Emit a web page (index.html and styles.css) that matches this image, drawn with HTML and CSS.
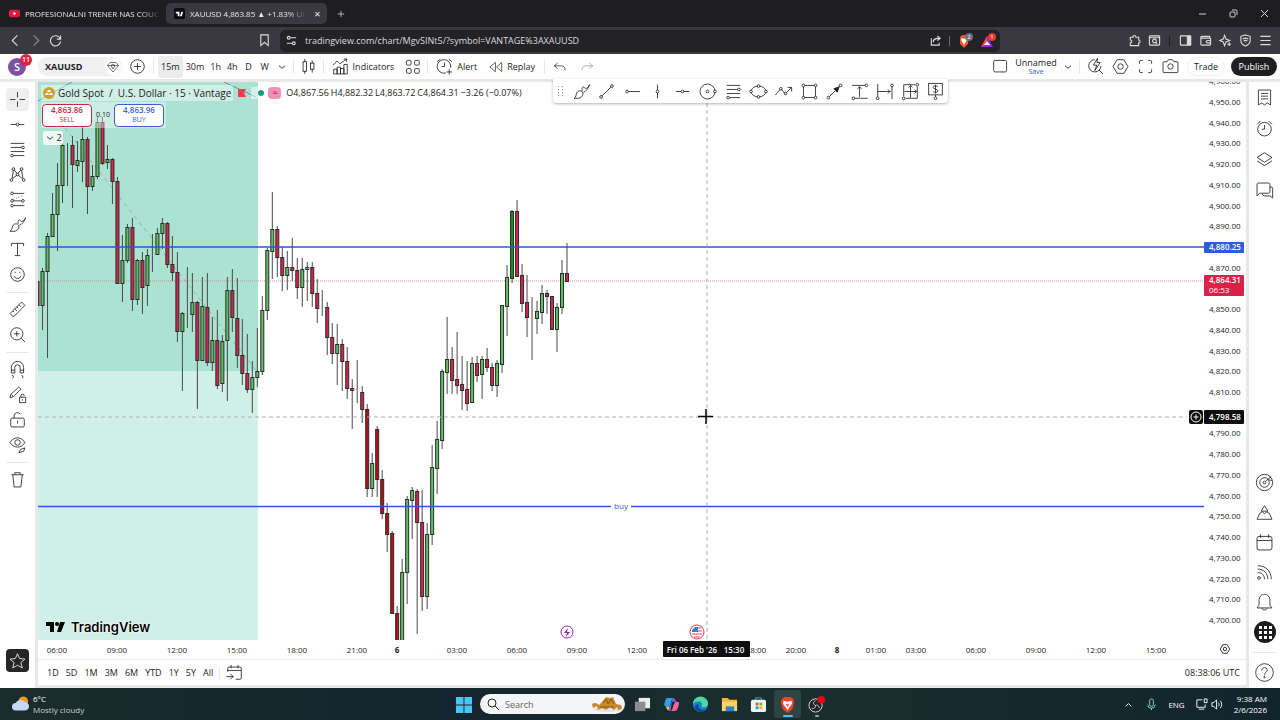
FILE: index.html
```html
<!DOCTYPE html>
<html lang="en">
<head>
    <meta charset="utf-8">
    <title>XAUUSD 4,863.85 ▲ +1.83% Unnamed</title>
    <link rel="stylesheet" href="styles.css">
</head>
<body>
    <!-- icon sprite -->
    <svg class="sprite" aria-hidden="true">
        <symbol id="i-cross" viewBox="0 0 28 28"><path d="M14 3v8M14 17v8M3 14h8M17 14h8"/></symbol>
        <symbol id="i-hmid" viewBox="0 0 28 28"><path d="M4 14h8M16 14h8"/><circle cx="14" cy="14" r="2"/></symbol>
        <symbol id="i-hray" viewBox="0 0 28 28"><path d="M8 14h17"/><circle cx="6" cy="14" r="2"/></symbol>
        <symbol id="i-vline" viewBox="0 0 28 28"><path d="M14 4v8M14 16v8"/><circle cx="14" cy="14" r="2"/></symbol>
        <symbol id="i-trend" viewBox="0 0 28 28"><path d="M7.500 20.500L20.500 7.500"/><circle cx="6" cy="22" r="2"/><circle cx="22" cy="6" r="2"/></symbol>
        <symbol id="i-fib" viewBox="0 0 28 28"><path d="M4 5h20M4 11h16M4 17h20M8 23h16"/><circle cx="22" cy="11" r="2"/><circle cx="6" cy="23" r="2"/></symbol>
        <symbol id="i-pattern" viewBox="0 0 28 28"><path d="M6 20L8 8M9 7l4 5M15 12l4-5M20 8l2 12M7 20l6-5M15 15l6 5"/><circle cx="5" cy="22" r="2"/><circle cx="8" cy="6" r="2"/><circle cx="14" cy="14" r="2"/><circle cx="20" cy="6" r="2"/><circle cx="23" cy="22" r="2"/></symbol>
        <symbol id="i-position" viewBox="0 0 28 28"><path d="M8 5h16M8 16h12M8 23h16"/><path d="M8 14l14-6" stroke-dasharray="1 3"/><circle cx="6" cy="5" r="2"/><circle cx="6" cy="16" r="2"/><circle cx="22" cy="16" r="2"/><circle cx="6" cy="23" r="2"/></symbol>
        <symbol id="i-brush" viewBox="0 0 28 28"><path d="M3 24c3-2 3-5 4-8 2-4 8-4 9 0s-3 8-7 8zM15 13c-1-4 1-7 3-5 2 3 5 1 8-4M17 15c4-1 7-6 9-11"/></symbol>
        <symbol id="i-text" viewBox="0 0 28 28"><path d="M5 9V5h18v4M14 5v18M10 23h8"/></symbol>
        <symbol id="i-smile" viewBox="0 0 28 28"><circle cx="14" cy="14" r="10"/><path d="M9 16c1 5 9 5 10 0M10.500 10v2M17.500 10v2"/></symbol>
        <symbol id="i-ruler" viewBox="0 0 28 28"><path d="M3 20L20 3l5 5L8 25zM7 16l2 2M10 13l3 3M13 10l2 2M16 7l3 3"/></symbol>
        <symbol id="i-zoom" viewBox="0 0 28 28"><circle cx="13" cy="13" r="9"/><path d="M19.500 19.500L25 25M13 9v8M9 13h8"/></symbol>
        <symbol id="i-magnet" viewBox="0 0 28 28"><path d="M5 19v-8a9 9 0 0118 0v8h-5v-8a4 4 0 00-8 0v8zM5 15h5M18 15h5M6 22l2 2-1 3M20 22l2 2-1 3"/></symbol>
        <symbol id="i-pencillock" viewBox="0 0 28 28"><path d="M3 19l1-5L16 3l3 3L8 17zM5 14l3 3M17 18h9v8h-9zM19 18v-2a2.500 2.500 0 015 0M21.500 21v2"/></symbol>
        <symbol id="i-lock" viewBox="0 0 28 28"><rect x="4" y="12" width="20" height="13" rx="2"/><path d="M9 12V8a5 5 0 019-2M14 16v4"/></symbol>
        <symbol id="i-eye" viewBox="0 0 28 28"><path d="M3 11c5-9 17-9 22 0-5 9-17 9-22 0zM16 26l3-5 6-2-2 5z"/><circle cx="14" cy="11" r="4"/></symbol>
        <symbol id="i-trash" viewBox="0 0 28 28"><path d="M5 7h18M10 7V4h8v3M7 7l2 18h10l2-18"/></symbol>
        <symbol id="i-star" viewBox="0 0 28 28"><path d="M14 4l3 7 8 1-6 5 2 8-7-4-7 4 2-8-6-5 8-1z"/></symbol>
        <symbol id="i-circle" viewBox="0 0 28 28"><circle cx="14" cy="14" r="11"/><circle cx="14" cy="14" r="2"/><circle class="dot-w" cx="25" cy="14" r="2"/></symbol>
        <symbol id="i-ellipse" viewBox="0 0 28 28"><ellipse cx="14" cy="14" rx="11" ry="8"/><circle class="dot-w" cx="3" cy="14" r="2"/><circle class="dot-w" cx="25" cy="14" r="2"/><circle class="dot-w" cx="14" cy="6" r="2"/><circle class="dot-w" cx="14" cy="22" r="2"/></symbol>
        <symbol id="i-path" viewBox="0 0 28 28"><path d="M2 19l7-8M11 11l5 6M18 16l8-8M20 8h6v6"/><circle cx="10" cy="10" r="2"/><circle cx="17" cy="17" r="2"/></symbol>
        <symbol id="i-rect" viewBox="0 0 28 28"><rect x="5" y="5" width="18" height="18"/><circle class="dot-w" cx="5" cy="5" r="2"/><circle class="dot-w" cx="23" cy="5" r="2"/><circle class="dot-w" cx="5" cy="23" r="2"/><circle class="dot-w" cx="23" cy="23" r="2"/></symbol>
        <symbol id="i-arrow" viewBox="0 0 28 28"><path d="M6 22L22 6"/><path class="solid" d="M13 10l8-3-3 8z"/><circle class="dot-w" cx="5" cy="23" r="2"/><circle class="dot-w" cx="23" cy="5" r="2"/></symbol>
        <symbol id="i-prange" viewBox="0 0 28 28"><path d="M3 5h19M7 24h19M14 7v15M11 10l3-3 3 3"/><circle cx="24" cy="5" r="2"/><circle cx="5" cy="24" r="2"/></symbol>
        <symbol id="i-drange" viewBox="0 0 28 28"><path d="M4 3v19M25 7v18M4 14h19M19 11l3 3-3 3"/><circle cx="4" cy="24" r="2"/><circle cx="25" cy="5" r="2"/></symbol>
        <symbol id="i-dprange" viewBox="0 0 28 28"><path d="M4 21V4h17M7 24h17V7M14 5v18M5 14h18M11 8l3-3 3 3M20 11l3 3-3 3"/><circle cx="24" cy="4" r="2"/><circle cx="4" cy="24" r="2"/></symbol>
        <symbol id="i-dollar" viewBox="0 0 28 28"><rect x="4" y="2" width="20" height="17"/><path d="M17.500 7c-1-2-7-2-7 1s7 2 7 5-6 3-7 1M14 4v13M14 19v3"/><circle cx="14" cy="24" r="2"/></symbol>
        <symbol id="i-plusc" viewBox="0 0 28 28"><circle cx="14" cy="14" r="10"/><path d="M14 9v10M9 14h10"/></symbol>
        <symbol id="i-gem" viewBox="0 0 28 28"><path d="M8 5h12l5 6-11 13L3 11zM3 11l11 0h11M10 11l4 7 4-7-4-3z"/></symbol>
        <symbol id="i-candles" viewBox="0 0 28 28"><rect x="6" y="7" width="5" height="14"/><path d="M8.500 3v4M8.500 21v4M19.500 5v4M19.500 18v5"/><rect x="17" y="9" width="5" height="9"/></symbol>
        <symbol id="i-indic" viewBox="0 0 28 28"><path d="M3 12l6-6 4 4 10-7M19 3h4v4M4 25v-7h5v7zM9 25V15h5v10M14 25v-8h5v8M19 25V11h5v14H9"/></symbol>
        <symbol id="i-grid4" viewBox="0 0 28 28"><rect x="5" y="5" width="7" height="7" rx="2"/><rect x="17" y="5" width="7" height="7" rx="2"/><rect x="5" y="17" width="7" height="7" rx="2"/><rect x="17" y="17" width="7" height="7" rx="2"/></symbol>
        <symbol id="i-alert" viewBox="0 0 28 28"><path d="M16 23.500A10 10 0 1123 16M14 8v6h-4M3 7l5-4M20 3l5 4M21 18v8M17 22h8"/></symbol>
        <symbol id="i-replay" viewBox="0 0 28 28"><path d="M13 6v16L3 14zM24 6v16l-9-8z"/></symbol>
        <symbol id="i-undo" viewBox="0 0 28 28"><path d="M10 7l-6 5 6 5M4 12h12c5 0 7 3 7 8"/></symbol>
        <symbol id="i-redo" viewBox="0 0 28 28"><path d="M18 7l6 5-6 5M24 12H12c-5 0-7 3-7 8"/></symbol>
        <symbol id="i-box" viewBox="0 0 28 28"><rect x="4" y="5" width="19" height="17" rx="2"/></symbol>
        <symbol id="i-chev" viewBox="0 0 28 28"><path d="M7 11l7 6 7-6"/></symbol>
        <symbol id="i-qsearch" viewBox="0 0 28 28"><path d="M13 4a9 9 0 109 9M19 19l6 6M17 2l-6 10h5l-3 8 8-12h-5z"/></symbol>
        <symbol id="i-hex" viewBox="0 0 28 28"><path d="M9 4h10l6 10-6 10H9L3 14z"/><circle cx="14" cy="14" r="4"/></symbol>
        <symbol id="i-full" viewBox="0 0 28 28"><path d="M5 10V7a2 2 0 012-2h3M18 5h3a2 2 0 012 2v3M23 18v3a2 2 0 01-2 2h-3M10 23H7a2 2 0 01-2-2v-3"/></symbol>
        <symbol id="i-camera" viewBox="0 0 28 28"><path d="M4 7h5l2-3h6l2 3h5a1 1 0 011 1v14a1 1 0 01-1 1H4a1 1 0 01-1-1V8a1 1 0 011-1z"/><circle cx="14" cy="14" r="4"/></symbol>
        <symbol id="i-list" viewBox="0 0 28 28"><path d="M5 3h18v22l-5-3-4 3-4-3-5 3zM9 8h10M9 12h10M9 16h10"/></symbol>
        <symbol id="i-clock" viewBox="0 0 28 28"><circle cx="14" cy="15" r="10"/><path d="M14 9v6h-4M3 8l5-5M20 3l5 5"/></symbol>
        <symbol id="i-layers" viewBox="0 0 28 28"><path d="M14 4l11 7-11 7L3 11zM3 16l11 7 11-7"/></symbol>
        <symbol id="i-chat" viewBox="0 0 28 28"><path d="M5 3h15a2 2 0 012 2v11a2 2 0 01-2 2H7l-4 4V5a2 2 0 012-2zM22 9h2a2 2 0 012 2v14l-4-3h-8a3 3 0 01-3-3"/></symbol>
        <symbol id="i-target" viewBox="0 0 28 28"><circle cx="14" cy="14" r="12"/><circle cx="14" cy="14" r="7"/><circle cx="14" cy="14" r="2"/><path d="M16 12l8-7M20 10l5 1"/></symbol>
        <symbol id="i-ideas" viewBox="0 0 28 28"><path d="M9 12l5-8 5 8zM7 15L3 24h22l-4-9M7 15l4-2 3 3 3-3 4 2"/></symbol>
        <symbol id="i-cal" viewBox="0 0 28 28"><rect x="3" y="5" width="22" height="20" rx="3"/><path d="M3 11h22M8 2v5M20 2v5"/></symbol>
        <symbol id="i-feed" viewBox="0 0 28 28"><circle cx="6" cy="22" r="2"/><path d="M4 14c6 0 10 4 10 10M4 9c9 0 15 6 15 15M4 4c12 0 20 8 20 20"/></symbol>
        <symbol id="i-bell" viewBox="0 0 28 28"><path d="M14 2c-5 0-8 4-8 9v7l-3 4h22l-3-4v-7c0-5-3-9-8-9zM10 22c1 4 7 4 8 0"/></symbol>
        <symbol id="i-help" viewBox="0 0 28 28"><circle cx="14" cy="14" r="13"/><path d="M10 11c0-6 9-5 8 0-1 3-4 3-4 7"/><circle cx="14" cy="21" r="1"/></symbol>
        <symbol id="i-goto" viewBox="0 0 28 28"><path d="M4 13V8a2 2 0 012-2h16a2 2 0 012 2v14a2 2 0 01-2 2h-6M4 11h20M9 3v5M19 3v5M2 20h10M8 16l4 4-4 4"/></symbol>
        <symbol id="i-back" viewBox="0 0 28 28"><path d="M18 3L7 14l11 11"/></symbol>
        <symbol id="i-fwd" viewBox="0 0 28 28"><path d="M10 3l11 11-11 11"/></symbol>
        <symbol id="i-reload" viewBox="0 0 28 28"><path d="M24 10A11 11 0 1025 16M25 3v8h-8"/></symbol>
        <symbol id="i-mark" viewBox="0 0 28 28"><path d="M6 2h16v23l-8-7-8 7z"/></symbol>
        <symbol id="i-site" viewBox="0 0 28 28"><path d="M12 8h12M4 20h11"/><circle cx="8" cy="8" r="3"/><circle cx="19" cy="20" r="3"/></symbol>
        <symbol id="i-share" viewBox="0 0 28 28"><path d="M5 9v15h17v-5M9 18c0-7 4-9 14-9M18 4l6 5-6 5"/></symbol>
        <symbol id="i-puzzle" viewBox="0 0 28 28"><path d="M5 7h6c-1-5 6-5 6 0h6v6c4 0 4 6 0 6v6H5v-6c4 0 4-6 0-6z"/></symbol>
        <symbol id="i-tabfind" viewBox="0 0 28 28"><rect x="3" y="4" width="22" height="20" rx="2"/><path d="M3 8h22M16 18l4 3"/><circle cx="14" cy="15" r="4"/></symbol>
        <symbol id="i-side" viewBox="0 0 28 28"><rect x="3" y="4" width="22" height="20" rx="1"/><path class="solid" d="M18 5h7v18h-7z"/></symbol>
        <symbol id="i-wallet" viewBox="0 0 28 28"><path d="M23 9V5H6a2 2 0 000 4h17a2 2 0 012 2v11a2 2 0 01-2 2H6a2 2 0 01-2-2V7M25 14h-7a2 2 0 000 5h7"/></symbol>
        <symbol id="i-spark" viewBox="0 0 28 28"><path d="M12 3l3 8 8 3-8 3-3 8-3-8-7-3 7-3zM22 18v8M18 22h8"/></symbol>
        <symbol id="i-shield" viewBox="0 0 28 28"><path d="M14 2l10 3v9c0 6-5 10-10 12C9 24 4 20 4 14V5zM8 11c4-3 8-3 12 0M10 15c3-2 5-2 8 0M14 18v1"/></symbol>
        <symbol id="i-menu" viewBox="0 0 28 28"><path d="M3 5h22M3 14h22M3 23h22"/></symbol>
    </svg>

    <div class="tabs">
        <div class="tab">
            <svg class="fav" viewBox="0 0 12 12"><rect y="2" width="12" height="8" rx="2" fill="#e5173b"/><path d="M5 4l3 2-3 2z" fill="#fff"/></svg>
            <span class="tab-name">PROFESIONALNI TRENER NAS COUC</span>
        </div>
        <div class="tab tab-active">
            <svg class="fav" viewBox="0 0 12 12"><rect width="12" height="12" rx="2" fill="#0c0c10"/><path d="M2 4h4v5H4V6H2zM8 4h2L8.500 9h-2z" fill="#fff"/></svg>
            <span class="tab-name">XAUUSD 4,863.85 ▲ +1.83% Un</span>
            <button class="tab-close" aria-label="Close tab">✕</button>
        </div>
        <button class="tab-new" aria-label="New tab"><svg viewBox="0 0 10 10"><path d="M5 1v8M1 5h8"/></svg></button>
        <div class="win">
            <button aria-label="Minimize"><svg viewBox="0 0 10 10"><path d="M1 5h7"/></svg></button>
            <button aria-label="Restore"><svg viewBox="0 0 10 10"><rect x="1" y="3" width="5" height="5" rx="1"/><path d="M3 1h4a1 1 0 011 1v4"/></svg></button>
            <button aria-label="Close"><svg viewBox="0 0 10 10"><path d="M1 1l7 7M8 1L1 8"/></svg></button>
        </div>
    </div>

    <div class="navbar">
        <div class="nav-left">
            <button aria-label="Back"><svg class="icon"><use href="#i-back"/></svg></button>
            <button class="dim" aria-label="Forward"><svg class="icon"><use href="#i-fwd"/></svg></button>
            <button aria-label="Reload"><svg class="icon"><use href="#i-reload"/></svg></button>
        </div>
        <button class="bookmark" aria-label="Bookmark"><svg class="icon"><use href="#i-mark"/></svg></button>
        <div class="address">
            <svg class="icon"><use href="#i-site"/></svg>
            <input type="text" aria-label="Address" value="tradingview.com/chart/MgvSINt5/?symbol=VANTAGE%3AXAUUSD">
            <button aria-label="Share"><svg class="icon"><use href="#i-share"/></svg></button>
            <i></i>
            <svg class="ext" viewBox="0 0 16 16"><path d="M3 4l2-2h5l2 2-1 7-4 4-4-4z" fill="#f0562b"/><path d="M5 5l2 1 2-1 1 2-3 5-3-5z" fill="#fff"/><circle cx="12" cy="4" r="4" fill="#6b6b80"/><text x="12" y="6" class="ext-n">2</text></svg>
            <svg class="ext" viewBox="0 0 16 16"><path d="M7 3l6 11H1z" fill="#8a2be2"/><path d="M7 3L1 14l6-3z" fill="#ff4724"/><path d="M7 8l3 4H4z" fill="#fff"/><circle cx="12" cy="4" r="4" fill="#e8392d"/><text x="12" y="6" class="ext-n">1</text></svg>
        </div>
        <div class="nav-right">
            <button aria-label="Extensions"><svg class="icon"><use href="#i-puzzle"/></svg></button>
            <button aria-label="Search tabs"><svg class="icon"><use href="#i-tabfind"/></svg></button>
            <i></i>
            <button aria-label="Sidebar"><svg class="icon"><use href="#i-side"/></svg></button>
            <button aria-label="Wallet"><svg class="icon"><use href="#i-wallet"/></svg></button>
            <button aria-label="Leo"><svg class="icon"><use href="#i-spark"/></svg></button>
            <button aria-label="VPN"><svg class="icon"><use href="#i-shield"/></svg></button>
            <button aria-label="Menu"><svg class="icon"><use href="#i-menu"/></svg></button>
        </div>
    </div>

    <div class="topbar">
        <div class="avatar">S<span class="badge">11</span></div>
        <button class="symbol">XAUUSD <svg class="icon sm"><use href="#i-gem"/></svg></button>
        <button class="ib w31" aria-label="Compare"><svg class="icon"><use href="#i-plusc"/></svg></button>
        <i></i>
        <div class="frames">
            <button class="on">15m</button><button>30m</button><button>1h</button><button>4h</button><button>D</button><button>W</button><button aria-label="More intervals"><svg class="icon xs"><use href="#i-chev"/></svg></button>
        </div>
        <i></i>
        <button class="ib w29" aria-label="Candles"><svg class="icon"><use href="#i-candles"/></svg></button>
        <i></i>
        <button class="tb"><svg class="icon"><use href="#i-indic"/></svg>Indicators</button>
        <button class="ib w29" aria-label="Layouts"><svg class="icon"><use href="#i-grid4"/></svg></button>
        <i></i>
        <button class="tb"><svg class="icon"><use href="#i-alert"/></svg>Alert</button>
        <button class="tb replay"><svg class="icon sm"><use href="#i-replay"/></svg>Replay</button>
        <i></i>
        <button class="ib w29" aria-label="Undo"><svg class="icon sm"><use href="#i-undo"/></svg></button>
        <button class="ib dim" aria-label="Redo"><svg class="icon sm"><use href="#i-redo"/></svg></button>
        <div class="topbar-right">
            <button class="ib" aria-label="Layout"><svg class="icon"><use href="#i-box"/></svg></button>
            <button class="layout-name">Unnamed<small>Save</small></button>
            <button class="manage" aria-label="Manage layouts"><svg class="icon xs"><use href="#i-chev"/></svg></button>
            <i></i>
            <button class="ib" aria-label="Quick search"><svg class="icon"><use href="#i-qsearch"/></svg></button>
            <button class="ib" aria-label="Settings"><svg class="icon"><use href="#i-hex"/></svg></button>
            <button class="ib" aria-label="Fullscreen"><svg class="icon"><use href="#i-full"/></svg></button>
            <button class="ib" aria-label="Snapshot"><svg class="icon"><use href="#i-camera"/></svg></button>
            <button class="trade">Trade</button>
            <button class="publish">Publish</button>
        </div>
    </div>

    <div class="main">
        <div class="tools">
            <button class="on" aria-label="Cross"><svg class="icon"><use href="#i-cross"/></svg></button>
            <button aria-label="Line"><svg class="icon"><use href="#i-hmid"/></svg></button>
            <button aria-label="Fib"><svg class="icon"><use href="#i-fib"/></svg></button>
            <button aria-label="Patterns"><svg class="icon"><use href="#i-pattern"/></svg></button>
            <button aria-label="Position"><svg class="icon"><use href="#i-position"/></svg></button>
            <button aria-label="Brush"><svg class="icon"><use href="#i-brush"/></svg></button>
            <button aria-label="Text"><svg class="icon"><use href="#i-text"/></svg></button>
            <button aria-label="Icons"><svg class="icon"><use href="#i-smile"/></svg></button>
            <hr>
            <button aria-label="Measure"><svg class="icon"><use href="#i-ruler"/></svg></button>
            <button aria-label="Zoom in"><svg class="icon"><use href="#i-zoom"/></svg></button>
            <hr>
            <button aria-label="Magnet"><svg class="icon"><use href="#i-magnet"/></svg></button>
            <button aria-label="Keep drawing"><svg class="icon"><use href="#i-pencillock"/></svg></button>
            <button aria-label="Lock"><svg class="icon"><use href="#i-lock"/></svg></button>
            <button aria-label="Hide"><svg class="icon"><use href="#i-eye"/></svg></button>
            <hr>
            <button aria-label="Remove"><svg class="icon"><use href="#i-trash"/></svg></button>
            <button class="fav-toggle" aria-label="Favorites"><svg class="icon"><use href="#i-star"/></svg></button>
        </div>

        <div class="chart">
            <div class="pane">
                <svg class="plot" id="plot"></svg>

                <div class="legend">
                    <div class="legend-row">
                        <div class="title">
                            <svg viewBox="0 0 12 12"><circle cx="6" cy="6" r="6" fill="#c9a227"/><path d="M4 5l1-2h2l1 2zM2 8l1-2h2.500v2zM6.500 8V6H9l1 2z" fill="#fff"/></svg>
                            <span>Gold Spot&nbsp; / &nbsp;U.S. Dollar · 15 · Vantage</span>
                        </div>
                        <svg class="flag" viewBox="0 0 10 10"><path d="M1 1h8L7 5l2 4H1z" fill="#f7374f"/></svg>
                        <div class="status"><b></b><em>≈</em></div>
                        <div class="ohlc"><span>O4,867.56</span><span>H4,882.32</span><span>L4,863.72</span><span>C4,864.31</span><span>−3.26 (−0.07%)</span></div>
                    </div>
                    <div class="quotes">
                        <button class="sell">4,863.86<small>SELL</small></button>
                        <span>0.10</span>
                        <button class="buy">4,863.96<small>BUY</small></button>
                    </div>
                    <button class="more"><svg class="icon xs"><use href="#i-chev"/></svg>2</button>
                </div>

                <div class="tv-logo">
                    <svg viewBox="0 0 20 12"><path d="M1 1h8v10H5V5H1zM15 1h5l-4 10h-4z" fill="#000"/><circle cx="12" cy="3" r="2" fill="#000"/></svg>
                    TradingView
                </div>
                <button class="add-alert" aria-label="Add at price"><svg class="icon sm"><use href="#i-plusc"/></svg></button>
            </div>
            <svg class="price-axis" id="prices"></svg>
            <svg class="time-axis" id="times"></svg>
            <button class="axis-settings" aria-label="Axis settings"><svg class="icon xs"><use href="#i-hex"/></svg></button>
            <div class="ranges">
                <button>1D</button><button>5D</button><button>1M</button><button>3M</button><button>6M</button><button>YTD</button><button>1Y</button><button>5Y</button><button>All</button>
                <i></i>
                <button aria-label="Go to date"><svg class="icon"><use href="#i-goto"/></svg></button>
                <button class="clock">08:38:06 UTC</button>
            </div>
        </div>

        <div class="widgets">
            <button aria-label="Watchlist"><svg class="icon"><use href="#i-list"/></svg></button>
            <button aria-label="Alerts"><svg class="icon"><use href="#i-clock"/></svg></button>
            <button aria-label="Objects"><svg class="icon"><use href="#i-layers"/></svg></button>
            <button aria-label="Chat"><svg class="icon"><use href="#i-chat"/></svg></button>
            <div class="widgets-low">
                <button aria-label="Screeners"><svg class="icon"><use href="#i-target"/></svg></button>
                <button aria-label="Ideas"><svg class="icon"><use href="#i-ideas"/></svg></button>
                <button aria-label="Calendar"><svg class="icon"><use href="#i-cal"/></svg></button>
                <button aria-label="News"><svg class="icon"><use href="#i-feed"/></svg></button>
                <button aria-label="Notifications"><svg class="icon"><use href="#i-bell"/></svg></button>
                <button aria-label="Products"><svg class="apps" viewBox="0 0 22 22"><circle cx="11" cy="11" r="11" fill="#1c1c1c"/><path d="M5 5h3v3H5zM10 5h3v3h-3zM15 5h3v3h-3zM5 10h3v3H5zM10 10h3v3h-3zM15 10h3v3h-3zM5 15h3v3H5zM10 15h3v3h-3zM15 15h3v3h-3z" fill="#fff"/></svg></button>
                <hr>
                <button aria-label="Help"><svg class="icon"><use href="#i-help"/></svg></button>
            </div>
        </div>

        <!-- floating favorites -->
        <div class="favorites">
            <svg class="grip" viewBox="0 0 8 12"><path d="M1 1h1v1H1zM5 1h1v1H5zM1 4h1v1H1zM5 4h1v1H5zM1 7h1v1H1zM5 7h1v1H5zM1 10h1v1H1zM5 10h1v1H5z" fill="#888"/></svg>
            <button aria-label="Brush"><svg class="icon"><use href="#i-brush"/></svg></button>
            <button aria-label="Trend line"><svg class="icon"><use href="#i-trend"/></svg></button>
            <button aria-label="Horizontal ray"><svg class="icon"><use href="#i-hray"/></svg></button>
            <button aria-label="Vertical line"><svg class="icon"><use href="#i-vline"/></svg></button>
            <button aria-label="Horizontal line"><svg class="icon"><use href="#i-hmid"/></svg></button>
            <button aria-label="Circle"><svg class="icon"><use href="#i-circle"/></svg></button>
            <button aria-label="Fib retracement"><svg class="icon"><use href="#i-fib"/></svg></button>
            <button aria-label="Ellipse"><svg class="icon"><use href="#i-ellipse"/></svg></button>
            <button aria-label="Path"><svg class="icon"><use href="#i-path"/></svg></button>
            <button aria-label="Rectangle"><svg class="icon"><use href="#i-rect"/></svg></button>
            <button aria-label="Arrow"><svg class="icon"><use href="#i-arrow"/></svg></button>
            <button aria-label="Price range"><svg class="icon"><use href="#i-prange"/></svg></button>
            <button aria-label="Date range"><svg class="icon"><use href="#i-drange"/></svg></button>
            <button aria-label="Date and price range"><svg class="icon"><use href="#i-dprange"/></svg></button>
            <button aria-label="Price note"><svg class="icon"><use href="#i-dollar"/></svg></button>
        </div>
    </div>

    <div class="taskbar">
        <div class="weather">
            <svg viewBox="0 0 18 16"><circle cx="12" cy="5" r="5" fill="#f59a23"/><path d="M4 15a4 4 0 010-8 5 5 0 019-1 4 4 0 011 9z" fill="#c5d8f5"/></svg>
            <div>6°C<br><span>Mostly cloudy</span></div>
        </div>
        <div class="apps-row">
            <button aria-label="Start"><svg viewBox="0 0 18 18"><path d="M1 1h8v8H1zM10 1h8v8h-8zM1 10h8v8H1zM10 10h8v8h-8z" fill="#4cc2f5"/></svg></button>
            <label class="search">
                <svg class="icon sm" viewBox="0 0 14 14"><circle cx="6" cy="6" r="4"/><path d="M9 9l4 4"/></svg>
                <input type="text" placeholder="Search" aria-label="Search">
                <svg class="bridge" viewBox="0 0 32 18"><ellipse cx="17" cy="14" rx="14" ry="3" fill="#dfe6ea"/><path d="M1 9c3-2 5-1 7 1l3-3 4-5 4 1 3-1 3 7 5 1 1 4-4 1-1-3-3 3-4-3-4 3-4-2-4 2-1-4-4 2z" fill="#c98a2b"/><path d="M12 8l3-4 2 5 3-5 3 5M9 12h14" fill="none" stroke="#8a5212"/></svg>
            </label>
            <button aria-label="Task view"><svg viewBox="0 0 18 18"><rect x="5" y="2" width="12" height="11" fill="#eee"/><rect x="1" y="6" width="11" height="10" fill="#8b8f92"/></svg></button>
            <button aria-label="Copilot"><svg viewBox="0 0 18 18"><path d="M5 2h5l-3 9H4c-3 0-3-2-2-5 1-3 1-4 3-4z" fill="#2fa0e8"/><path d="M10 2c3 0 3 2 4 4h-5L7 12c-1 3-2 4 1 4" fill="#7b5cf0"/><path d="M13 6h2c3 0 2 3 1 6s-2 4-4 4H7c3 0 3-3 4-6z" fill="#f0629a"/><path d="M3 11h4l-1 4c-2 0-2-2-3-4z" fill="#f7c23c"/></svg></button>
            <button aria-label="Edge"><svg viewBox="0 0 18 18"><circle cx="9" cy="9" r="8" fill="#1a7fd4"/><path d="M1 9a8 8 0 0116-1c0 4-5 5-7 3 2-3-1-6-4-5-3 0-5 2-5 3z" fill="#4fd6a0"/><path d="M7 9c-1 4 3 7 8 5-3 4-10 4-12-1 0-3 2-5 4-4z" fill="#114a8b"/></svg></button>
            <button aria-label="Explorer"><svg viewBox="0 0 18 18"><path d="M1 2h6l2 2h8v12H1z" fill="#f6b73c"/><path d="M1 6h16v10H1z" fill="#fcd462"/><path d="M5 11h9v5H5z" fill="#2d7fd3"/></svg></button>
            <button aria-label="Store"><svg viewBox="0 0 18 18"><path d="M6 5V2h6v3" fill="none" stroke="#39a5e8" stroke-width="1"/><rect x="1" y="4" width="16" height="13" rx="2" fill="#eef3f6"/><path d="M6 7h3v3H6z" fill="#f25022"/><path d="M10 7h3v3h-3z" fill="#7fba00"/><path d="M6 11h3v3H6z" fill="#00a4ef"/><path d="M10 11h3v3h-3z" fill="#ffb900"/></svg></button>
            <button class="running" aria-label="Brave"><svg viewBox="0 0 18 18"><path d="M3 3l3-2h6l3 2 1 3-2 8-5 4-5-4-2-8z" fill="#f0452b"/><path d="M5 5l4 1 4-1 1 3-3 4-2 3-2-3-3-4z" fill="#fff"/><path d="M7 8l2 1 2-1-2 4z" fill="#f0452b"/></svg></button>
            <button class="idle" aria-label="OBS"><svg viewBox="0 0 18 18"><circle cx="8" cy="10" r="7" fill="#26232a" stroke="#ddd"/><path d="M8 5c-3 1-3 4 0 5M12 13c0-3-3-4-4-3M4 13c3 1 4-1 4-3" fill="none" stroke="#ccc"/><circle cx="14" cy="4" r="4" fill="#e50914"/></svg></button>
        </div>
        <div class="tray">
            <svg viewBox="0 0 14 14"><path d="M4 9l3-3 3 3"/></svg>
            <svg class="mic" viewBox="0 0 14 14"><rect x="5" y="1" width="4" height="8" rx="2"/><path d="M3 7a4 4 0 008 0M7 11v2"/></svg>
            <span>ENG</span>
            <div class="tray-pair">
                <svg viewBox="0 0 14 14"><path d="M8 2H2v8h9V7M4 12h6M10 1h3v4h-3z"/></svg>
                <svg viewBox="0 0 14 14"><path d="M1 5h2l3-3v10L3 9H1zM8 5c1 1 1 3 0 4M10 3c2 2 2 6 0 8"/></svg>
            </div>
            <div class="when">9:38 AM<br>2/6/2026</div>
        </div>
    </div>

    <script src="chart.js"></script>
</body>
</html>
```
FILE: styles.css
```css
* {
    box-sizing: border-box;
}

body {
    margin: 0;
    height: 100vh;
    display: flex;
    flex-direction: column;
    overflow: hidden;
    background: #e8e8e8;
    color: #1c1c1c;
    font-family: "Open Sans", "Noto Sans", sans-serif;
    font-size: 9px;
    line-height: 12px;
}

button, input {
    font: inherit;
    color: inherit;
    border: none;
    background: none;
    padding: 0;
    margin: 0;
}

button {
    display: flex;
    align-items: center;
    justify-content: center;
    white-space: nowrap;
}

.sprite {
    display: none;
}

.icon {
    width: 19px;
    height: 19px;
    flex: none;
    fill: none;
    stroke: currentColor;
    stroke-width: 1.2;
}

.icon.sm {
    width: 16px;
    height: 16px;
}

.icon.xs {
    width: 12px;
    height: 12px;
    stroke-width: 2;
}

.solid {
    fill: currentColor;
}

.dot-w {
    fill: #fff;
}

/* browser chrome */
.tabs {
    flex: none;
    height: 27px;
    display: flex;
    align-items: center;
    background: #1e1d22;
    color: #e6e6e8;
    font-size: 8px;
}

.tab {
    width: 166px;
    height: 21px;
    padding: 0 5px 0 9px;
    display: flex;
    align-items: center;
    gap: 5px;
    border-radius: 5px;
}

.tab-active {
    width: 161px;
    background: #3a393f;
    padding: 0 4px 0 8px;
}

.tab-name {
    flex: 1;
    overflow: hidden;
    white-space: nowrap;
    -webkit-mask-image: linear-gradient(90deg, #000 85%, transparent);
}

.fav {
    width: 11px;
    height: 11px;
    flex: none;
}

.tab-close {
    width: 12px;
    font-size: 8px;
}

.tab-new {
    width: 28px;
}

.win {
    margin-left: auto;
    display: flex;
}

.win button {
    width: 31px;
}

.win svg, .tab-new svg {
    width: 10px;
    height: 10px;
    fill: none;
    stroke: #d0d0d4;
}

.tab-new svg {
    width: 8px;
    height: 8px;
}

.navbar {
    flex: none;
    height: 27px;
    display: flex;
    align-items: center;
    background: #3a393f;
    color: #dcdcde;
}

.navbar .icon {
    width: 13px;
    height: 13px;
    stroke-width: 2.4;
}

.nav-left {
    display: flex;
    flex: 0 1 249px;
    padding-left: 5px;
}

.nav-left button {
    width: 20px;
}

.dim {
    opacity: 0.5;
}

.bookmark {
    width: 31px;
}

.address {
    flex: 0 1 720px;
    height: 22px;
    display: flex;
    align-items: center;
    gap: 7px;
    padding: 0 4px 0 5px;
    border-radius: 5px;
    background: #232227;
}

.address input {
    flex: 1;
    min-width: 0;
    outline: none;
}

.address i, .nav-right i {
    width: 1px;
    height: 10px;
    background: #6a696f;
}

.ext {
    width: 16px;
    height: 16px;
}

.ext-n {
    font-size: 6px;
    fill: #fff;
    text-anchor: middle;
}

.nav-right {
    flex: 1;
    display: flex;
    align-items: center;
    justify-content: flex-end;
    padding-right: 5px;
}

.nav-right button {
    width: 20px;
}

.nav-right i {
    margin: 0 5px;
    background: #1e1d22;
}

/* TradingView header */
.topbar {
    flex: none;
    height: 25px;
    margin-bottom: 3px;
    display: flex;
    align-items: center;
    background: #fff;
}

.topbar i {
    width: 1px;
    height: 15px;
    background: #e8e8e8;
}

.avatar {
    position: relative;
    width: 18px;
    height: 18px;
    margin: 0 12px 0 8px;
    border-radius: 50%;
    background: #7b549f;
    color: #fff;
    font-size: 11px;
    font-weight: 600;
    line-height: 18px;
    text-align: center;
}

.badge {
    position: absolute;
    top: -4px;
    right: -6px;
    width: 12px;
    height: 12px;
    border-radius: 50%;
    background: #e0213f;
    font-size: 7px;
    line-height: 12px;
}

.symbol {
    width: 84px;
    height: 19px;
    padding: 0 1px 0 7px;
    justify-content: space-between;
    border-radius: 10px;
    background: #f0f0f0;
    font-weight: 700;
}

.symbol .icon {
    padding: 1px;
    border-radius: 50%;
    background: #fff;
}

.ib {
    width: 25px;
    height: 22px;
}

.w31 {
    width: 31px;
}

.w29 {
    width: 29px;
}

.frames {
    display: flex;
    padding: 0 2px 0 4px;
}

.frames button {
    min-width: 16px;
    height: 22px;
    padding: 0 3px;
}

.frames .on {
    background: #ececec;
    border-radius: 3px;
}

.tb {
    height: 22px;
    gap: 3px;
    padding: 0 4px 0 7px;
}

.tb.replay {
    padding-right: 9px;
}

.topbar-right {
    margin-left: auto;
    display: flex;
    align-items: center;
    padding-right: 3px;
}

.topbar-right i {
    margin: 0 3px 0 2px;
}

.layout-name {
    width: 46px;
    flex-direction: column;
    line-height: 10px;
}

.layout-name small {
    color: #2d5be3;
    font-size: 7px;
    line-height: 7px;
}

.manage {
    width: 18px;
}

.trade, .publish {
    height: 19px;
    border-radius: 10px;
    font-weight: 500;
}

.trade {
    width: 38px;
    margin: 0 6px 0 4px;
    border: 1px solid #f0f0f0;
}

.publish {
    width: 46px;
    background: #1f1f1f;
    color: #fff;
}

/* workspace */
.main {
    position: relative;
    flex: 1;
    min-height: 0;
    display: flex;
    gap: 3px;
}

.tools, .widgets {
    flex: none;
    display: flex;
    flex-direction: column;
    align-items: center;
    background: #fff;
}

.tools {
    width: 35px;
    padding: 5px 0 15px;
}

.tools button {
    width: 23px;
    height: 23px;
    margin: 1px 0;
    border-radius: 4px;
}

.tools .on {
    background: #efefef;
}

.tools hr, .widgets hr {
    width: 23px;
    height: 1px;
    margin: 5px 0 4px;
    border: none;
    background: #e8e8e8;
}

.tools .fav-toggle {
    margin-top: auto;
    background: #262626;
    color: #fff;
}

.widgets {
    width: 31px;
}

.widgets button {
    width: 31px;
    height: 31px;
}

.widgets-low {
    margin-top: auto;
    display: flex;
    flex-direction: column;
    align-items: center;
    padding-bottom: 1px;
}

.widgets-low button {
    height: 30px;
}

.widgets .apps {
    width: 22px;
    height: 22px;
}

.chart {
    flex: 1;
    min-width: 0;
    margin-bottom: 3px;
    display: grid;
    grid-template-columns: 1fr 42px;
    grid-template-rows: 1fr 19px 26px;
    background: #fff;
}

.pane {
    position: relative;
    overflow: hidden;
}

.plot, .price-axis, .time-axis {
    display: block;
    width: 100%;
    height: 100%;
    overflow: hidden;
}

.plot {
    position: absolute;
    top: 0;
    left: 0;
}

.price-axis, .time-axis {
    font-size: 8px;
    font-weight: 500;
    fill: #1c1c1c;
}

.price-axis .last, .tag-text {
    fill: #fff;
    font-weight: 600;
}

.price-axis .last {
    font-weight: 400;
}

.time-axis {
    text-anchor: middle;
}

.major {
    font-weight: 700;
}

.wick {
    fill: #4a4a4a;
}

.body {
    stroke: #2c2c2c;
    stroke-width: 1;
}

.up {
    fill: #5fc063;
}

.down {
    fill: #d0264c;
}

.fall {
    fill: #b80f16;
}

.rise {
    fill: #14901a;
}

.level {
    stroke: #2d56d8;
    stroke-width: 1.5;
}

.level-text {
    fill: #2d56d8;
    font-size: 8px;
    text-anchor: middle;
}

.axis-settings {
    height: 18px;
}

.ranges {
    grid-column: 1 / 3;
    display: flex;
    align-items: center;
    padding: 0 6px 0 6px;
    border-top: 1px solid #ececec;
}

.ranges button {
    padding: 0 4px 0 3px;
}

.ranges i {
    width: 1px;
    height: 12px;
    margin: 0 2px;
    background: #e8e8e8;
}

.ranges .clock {
    margin-left: auto;
    padding: 0;
}

.legend {
    position: absolute;
    top: 3px;
    left: 3px;
}

.legend-row, .title, .status, .ohlc, .quotes {
    display: flex;
    align-items: center;
}

.title {
    height: 16px;
    padding: 0 2px;
    gap: 3px;
    background: rgba(255, 255, 255, 0.45);
    font-size: 10px;
    white-space: nowrap;
}

.title svg {
    width: 12px;
    height: 12px;
}

.flag {
    width: 10px;
    height: 10px;
    margin: 0 4px;
}

.status {
    height: 12px;
    gap: 4px;
    padding-left: 7px;
    background: rgba(255, 255, 255, 0.5);
}

.status b {
    width: 6px;
    height: 6px;
    border-radius: 50%;
    background: #1a9b76;
}

.status em {
    width: 13px;
    height: 12px;
    border-radius: 4px;
    background: #f191b8;
    color: #a3124c;
    font-style: normal;
    text-align: center;
    line-height: 12px;
}

.ohlc {
    gap: 2px;
    margin-left: 5px;
    white-space: nowrap;
}

.quotes {
    width: 125px;
    height: 26px;
    padding: 0 2px 0 1px;
    margin-top: 1px;
    justify-content: space-between;
    background: rgba(255, 255, 255, 0.4);
    font-size: 7px;
}

.quotes button {
    width: 50px;
    height: 23px;
    flex-direction: column;
    border: 1px solid;
    border-radius: 4px;
    background: #fff;
    font-size: 8px;
    font-weight: 600;
    line-height: 10px;
}

.quotes small {
    font-size: 7px;
    font-weight: 400;
    line-height: 10px;
}

.quotes .sell {
    color: #c22a46;
}

.quotes .buy {
    color: #3b5fd0;
}

.more {
    height: 14px;
    width: 20px;
    margin: 3px 2px;
    background: rgba(255, 255, 255, 0.8);
    border-radius: 2px;
}

.tv-logo {
    position: absolute;
    left: 7px;
    bottom: 5px;
    display: flex;
    align-items: center;
    gap: 6px;
    color: #000;
    font-family: Inter, sans-serif;
    font-size: 13px;
    font-weight: 600;
    line-height: 16px;
    text-shadow: 0 0 2px #fff, 0 0 2px #fff;
}

.tv-logo svg {
    width: 20px;
    height: 12px;
}

.add-alert {
    position: absolute;
    right: 1px;
    top: 328px;
    width: 14px;
    height: 14px;
    border-radius: 2px;
    background: #0f0f0f;
    color: #fff;
}

.add-alert .icon {
    width: 14px;
    height: 14px;
    stroke-width: 2;
}

.favorites {
    position: absolute;
    top: -3px;
    left: 553px;
    width: 395px;
    height: 24px;
    display: flex;
    align-items: center;
    padding-left: 4px;
    background: #fff;
    border-radius: 0 0 4px 4px;
    box-shadow: 0 1px 3px rgba(0, 0, 0, 0.3);
}

.favorites button {
    flex: 1;
}

.favorites .grip {
    width: 8px;
    height: 12px;
    margin-right: 4px;
}

/* windows taskbar */
.taskbar {
    flex: none;
    height: 32px;
    display: grid;
    grid-template-columns: 1fr auto 1fr;
    align-items: center;
    background: linear-gradient(90deg, #1a2c2c, #14252f 35%, #1a2e2e 60%, #12252d);
    color: #fff;
    font-size: 8px;
    line-height: 11px;
}

.weather {
    display: flex;
    align-items: center;
    gap: 4px;
    padding-left: 12px;
}

.weather svg {
    width: 17px;
    height: 16px;
}

.weather span {
    color: #c9d1d3;
}

.apps-row {
    display: flex;
    align-items: center;
}

.apps-row button {
    position: relative;
    width: 29px;
    height: 28px;
    border-radius: 3px;
}

.apps-row button svg {
    width: 17px;
    height: 17px;
}

.apps-row .running {
    width: 27px;
    margin: 0 1px;
    background: rgba(255, 255, 255, 0.1);
}

.running::after, .idle::after {
    content: "";
    position: absolute;
    bottom: 1px;
    width: 10px;
    height: 2px;
    border-radius: 1px;
    background: #4cc2f5;
}

.idle::after {
    width: 4px;
    background: #9aa3a6;
}

.search {
    width: 145px;
    height: 20px;
    margin: 0 3px 0 2px;
    display: flex;
    align-items: center;
    gap: 5px;
    padding: 0 2px 0 6px;
    border-radius: 10px;
    background: #f3f5f6;
    color: #222;
    font-size: 9px;
}

.search .icon {
    width: 14px;
    height: 14px;
    stroke-width: 1;
}

.search input {
    flex: 1;
    min-width: 0;
}

.search input::placeholder {
    color: #666;
}

.bridge {
    width: 32px;
    height: 18px;
}

.tray {
    display: flex;
    align-items: center;
    justify-content: flex-end;
    gap: 10px;
    padding-right: 13px;
    text-align: right;
}

.tray svg {
    width: 13px;
    height: 13px;
    fill: none;
    stroke: #fff;
}

.tray .mic {
    stroke: #7fd6cf;
}

.tray-pair {
    display: flex;
    gap: 3px;
}
```
FILE: chart.js
```js
// [high, body top, body bottom, low, type]
const candles = [
    [256,281,305,312,'d'],[268,271,305,330,'u'],[233,236,271,358,'u'],[193,214,236,237,'u'],[163,185,214,251,'u'],
    [143,145,185,203,'u'],[143,145,145,186,'u'],[136,145,164,208,'d'],[141,160,165,172,'u'],[127,139,161,182,'u'],
    [137,139,186,214,'d'],[165,176,186,191,'u'],[117,122,176,179,'u'],[117,122,163,165,'d'],[145,159,162,169,'u'],
    [158,159,181,204,'d'],[177,181,283,284,'d'],[235,260,283,302,'u'],[224,227,260,263,'u'],[218,227,299,311,'d'],
    [259,260,299,305,'u'],[252,260,287,314,'d'],[249,255,285,306,'u'],[234,255,255,272,'u'],[228,233,254,255,'u'],
    [218,223,233,249,'u'],[222,223,264,268,'d'],[236,264,272,281,'d'],[252,272,331,342,'d'],[312,313,331,391,'u'],
    [267,314,314,328,'u'],[273,302,314,332,'u'],[301,302,360,409,'d'],[277,306,360,361,'u'],[273,307,362,366,'d'],
    [317,340,362,371,'u'],[310,340,385,389,'d'],[335,341,383,392,'u'],[277,290,340,401,'u'],[269,290,317,332,'d'],
    [278,318,355,368,'d'],[319,355,373,385,'d'],[334,373,389,393,'d'],[361,377,389,413,'u'],[328,371,377,387,'u'],
    [296,310,371,375,'u'],[248,250,310,320,'u'],[192,229,251,279,'u'],[226,229,257,277,'d'],[247,257,275,291,'d'],
    [251,267,275,290,'u'],[238,267,270,281,'d'],[258,270,287,299,'d'],[258,269,287,307,'u'],[262,267,269,301,'u'],
    [262,267,293,307,'d'],[279,293,308,323,'d'],[290,308,308,316,'u'],[302,307,337,355,'d'],[323,337,353,364,'d'],
    [324,344,353,385,'u'],[339,344,361,391,'d'],[347,361,388,399,'d'],[379,388,390,429,'d'],[360,392,392,403,'u'],
    [386,392,409,423,'d'],[404,409,488,497,'f'],[453,463,488,497,'u'],[426,429,479,497,'f'],[470,479,513,519,'f'],
    [503,513,534,552,'f'],[531,533,613,614,'f'],[606,613,645,645,'f'],[559,572,645,645,'u'],[496,499,572,604,'u'],
    [487,490,500,539,'u'],[489,491,522,634,'d'],[490,522,596,611,'d'],[523,534,596,609,'u'],[445,467,534,545,'u'],
    [421,439,468,494,'u'],[369,371,440,449,'u'],[317,359,372,394,'u'],[347,359,380,394,'d'],[332,379,385,394,'d'],
    [356,384,390,410,'d'],[361,389,403,411,'d'],[357,363,402,403,'u'],[356,363,375,382,'d'],[356,359,374,399,'u'],
    [348,359,367,372,'d'],[363,367,385,391,'d'],[360,363,385,397,'u'],[305,305,364,373,'u'],[265,277,306,336,'u'],
    [210,211,278,283,'r'],[200,211,276,277,'d'],[264,275,303,312,'d'],[275,302,317,337,'d'],[297,317,317,360,'u'],
    [301,311,318,334,'u'],[285,293,312,324,'u'],[290,293,296,314,'d'],[296,296,329,330,'d'],[303,307,329,352,'u'],
    [260,273,307,314,'u'],[243,273,281,281,'d']
];
const types = { u: 'up', d: 'down', f: 'fall', r: 'rise' };
const left = 38, top_ = 82;

// session boxes and drawings under the candles
let under = `
    <rect x="38" y="82" width="220" height="289" fill="#abe2d1"/>
    <rect x="38" y="371" width="220" height="280" fill="#d0efe6"/>
    <path d="M65 128L258 373" stroke="#8fb5a9" stroke-dasharray="4 4"/>
    <path d="M38 101L72 82M224 82L256 97" stroke="#5f93b8"/>
    <path d="M38 281H3000" stroke="#d08c98" stroke-dasharray="1 1"/>`;

let bars = '';
candles.forEach((c, i) => {
    const x = 567 - (candles.length - 1 - i) * 4.995;
    bars += `<rect class="wick" x="${x - 0.5}" y="${c[0]}" width="1" height="${c[3] - c[0]}"/>`;
    bars += `<rect class="body ${types[c[4]]}" x="${x - 1.5}" y="${c[1] + 0.5}" width="3" height="${Math.max(c[2] - c[1], 0)}"/>`;
});

let over = `
    <path class="level" d="M38 247H3000M38 506.500H611M631 506.500H3000"/>
    <text class="level-text" x="621" y="509">buy</text>
    <path d="M38 417H1187M707 82V640" stroke="#b0b0b0" stroke-dasharray="4 3"/>
    <path d="M706 409v15M698 416.500h15" stroke="#000" stroke-width="1.5"/>
    <circle cx="567" cy="632" r="6" fill="#fff" stroke="#8e2aa5"/>
    <path d="M568 628l-4 5h3l-1 4 4-5h-3z" fill="#8e2aa5"/>
    <circle cx="697" cy="632" r="7" fill="#fff" stroke="#d8394e"/>
    <path d="M697 628h4M697 631h5M692 634h10M694 637h6" stroke="#e5485c"/>
    <path d="M692 632v-2l3-3h3v5z" fill="#3f7fd0"/>`;

document.getElementById('plot').innerHTML =
    `<g transform="translate(${-left} ${-top_})">${under}${bars}${over}</g>`;

const priceY = p => 538 - (p - 4700) * 2.0724;
const hidden = [4880, 4860, 4800];
let prices = '';
for (let p = 4960; p >= 4700; p -= 10) {
    if (hidden.includes(p)) continue;
    prices += `<text x="5" y="${Math.round(priceY(p)) + 3}">${p.toLocaleString('en-US')}.00</text>`;
}
prices += `
    <rect y="160" width="40" height="11" rx="1" fill="#2d5be3"/><text class="tag-text" x="5" y="168">4,880.25</text>
    <rect y="193" width="40" height="21" rx="1" fill="#de1f48"/><text class="tag-text" x="5" y="201">4,864.31</text>
    <text class="last" x="5" y="211">06:53</text>
    <rect y="328" width="40" height="14" rx="1" fill="#0f0f0f"/><text class="tag-text" x="5" y="338">4,798.58</text>`;
document.getElementById('prices').innerHTML = prices;

const times = [
    [57,'06:00'],[117,'09:00'],[177,'12:00'],[237,'15:00'],[297,'18:00'],[357,'21:00'],[397,'6'],[457,'03:00'],
    [517,'06:00'],[577,'09:00'],[637,'12:00'],[756,'18:00'],[796,'20:00'],[837,'8'],[876,'01:00'],[916,'03:00'],
    [976,'06:00'],[1036,'09:00'],[1096,'12:00'],[1156,'15:00']
];
document.getElementById('times').innerHTML = times.map(t =>
    `<text class="${t[1].length < 3 ? 'major' : ''}" x="${t[0] - left}" y="13">${t[1]}</text>`).join('') +
    `<rect x="625" y="1" width="87" height="16" rx="1" fill="#0f0f0f"/>
    <text class="tag-text" x="654" y="13">Fri 06 Feb '26</text><text class="tag-text" x="696" y="13">15:30</text>`;
```
